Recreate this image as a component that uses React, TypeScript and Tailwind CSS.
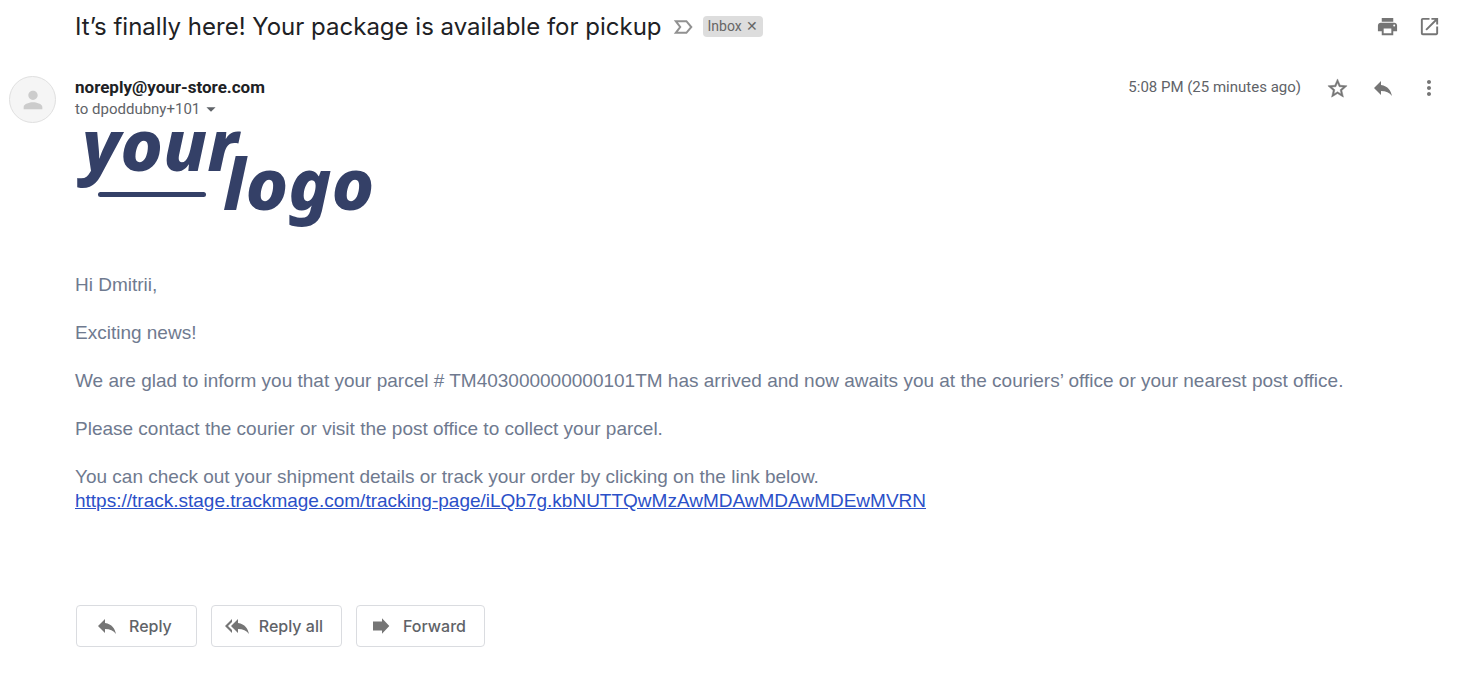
import type { ReactNode } from "react";
import { MdArrowDropDown, MdMoreVert, MdOpenInNew, MdPerson, MdPrint, MdReply, MdReplyAll } from "react-icons/md";

function IconButton({ label, children }: { label: string; children: ReactNode }) {
  return (
    <button type="button" aria-label={label} className="flex size-6 items-center justify-center text-[#757575]">
      {children}
    </button>
  );
}

function ActionButton({ icon, label, className }: { icon: ReactNode; label: string; className: string }) {
  return (
    <button
      type="button"
      className={`flex h-[42px] items-center rounded-sm border border-[#dadce0] font-['Inter'] text-base font-medium text-[#5f6368] ${className}`}
    >
      <span className="text-[#757575]">{icon}</span>
      {label}
    </button>
  );
}

function ForwardIcon() {
  return (
    <svg width="24" height="24" viewBox="0 0 24 24" fill="currentColor" aria-hidden="true">
      <path d="M4 7.5h9V4.3l7.3 7.7-7.3 7.7v-3.2H4z" />
    </svg>
  );
}

function ImportanceIcon() {
  return (
    <svg width="24" height="24" viewBox="0 0 24 24" fill="none" stroke="currentColor" strokeWidth="2" aria-hidden="true">
      <path d="M4.8 6.2h10.6l4.9 5.8-4.9 5.8H4.8L9.2 12z" />
    </svg>
  );
}

function StarIcon() {
  return (
    <svg
      width="23"
      height="23"
      viewBox="0 0 24 24"
      fill="currentColor"
      stroke="currentColor"
      strokeWidth="0.5"
      aria-hidden="true"
    >
      <path d="M22 9.24l-7.19-.62L12 2 9.19 8.63 2 9.24l5.46 4.73L5.82 21 12 17.27 18.18 21l-1.63-7.03L22 9.24zM12 15.4l-3.76 2.27 1-4.28-3.32-2.88 4.38-.38L12 6.1l1.71 4.04 4.38.38-3.32 2.88 1 4.28L12 15.4z" />
    </svg>
  );
}

function StoreLogo() {
  return (
    <svg
      width="300"
      height="100"
      viewBox="0 0 300 100"
      fill="#344067"
      role="img"
      aria-label="your logo"
      className="overflow-visible font-['Noto_Sans'] text-[72px] font-extrabold italic"
    >
      <text x="7" y="43">your</text>
      <text x="148" y="82">logo</text>
      <rect x="23" y="64" width="108" height="5" rx="2.5" />
    </svg>
  );
}

export default function App() {
  return (
    <main className="min-h-screen bg-white pr-5 pl-[9px] font-['Roboto',sans-serif] text-[#5f6368]">
      <header className="flex h-[53px] items-center pl-[66px]">
        <h1 className="font-['Inter'] text-2xl text-[#202124]">
          It’s finally here! Your package is available for pickup
        </h1>
        <button type="button" aria-label="Mark as important" className="ml-[9px] text-[#919191]">
          <ImportanceIcon />
        </button>
        <span className="ml-2 flex h-[21px] items-center gap-1 rounded-sm bg-[#ddd] px-[5px] pb-0.5 text-sm text-[#666]">
          Inbox
          <button type="button" aria-label="Remove label Inbox" className="text-sm">
            ✕
          </button>
        </span>
        <div className="ml-auto flex gap-[18px]">
          <IconButton label="Print all"><MdPrint size={23} /></IconButton>
          <IconButton label="In new window"><MdOpenInNew size={23} /></IconButton>
        </div>
      </header>

      <article>
        <div className="mt-[23px] flex h-[52px] items-start">
          <div className="flex size-[47px] items-center justify-center rounded-full border border-[#e0e0e0] bg-[#f5f5f5] text-[#ccc]">
            <MdPerson size={28} />
          </div>
          <div className="ml-[19px]">
            <p className="text-[17px] leading-[22px] font-bold text-[#202124]">noreply@your-store.com</p>
            <button type="button" className="flex items-center text-[15px] leading-[22px]">
              to dpoddubny+101
              <MdArrowDropDown size={22} />
            </button>
          </div>
          <div className="ml-auto flex items-start">
            <time className="text-[15px] leading-[22px]">5:08 PM (25 minutes ago)</time>
            <div className="ml-6 flex gap-[22px]">
              <IconButton label="Star"><StarIcon /></IconButton>
              <IconButton label="Reply"><MdReply size={24} /></IconButton>
              <IconButton label="More"><MdMoreVert size={24} /></IconButton>
            </div>
          </div>
        </div>

        <div className="pl-[66px]">
          <StoreLogo />
          <div className="mt-[45px] flex flex-col gap-6 font-['Liberation_Sans'] text-[19px] leading-6 text-[#6f7a8f]">
            <p>Hi Dmitrii,</p>
            <p>Exciting news!</p>
            <p>
              We are glad to inform you that your parcel # TM403000000000101TM has arrived and now awaits you at the
              couriers’ office or your nearest post office.
            </p>
            <p>Please contact the courier or visit the post office to collect your parcel.</p>
            <p>
              You can check out your shipment details or track your order by clicking on the link below.
              <br />
              <a
                href="https://track.stage.trackmage.com/tracking-page/iLQb7g.kbNUTTQwMzAwMDAwMDAwMDEwMVRN"
                className="text-[#2b50c8] underline"
              >
                https://track.stage.trackmage.com/tracking-page/iLQb7g.kbNUTTQwMzAwMDAwMDAwMDEwMVRN
              </a>
            </p>
          </div>
        </div>
      </article>

      <footer className="mt-[92px] flex gap-3.5 pl-[67px]">
        <ActionButton label="Reply" className="gap-2.5 pr-6 pl-[18px]" icon={<MdReply size={24} />} />
        <ActionButton label="Reply all" className="gap-2.5 pr-[18px] pl-[13px]" icon={<MdReplyAll size={24} />} />
        <ActionButton label="Forward" className="gap-2.5 pr-[18px] pl-3" icon={<ForwardIcon />} />
      </footer>
    </main>
  );
}
